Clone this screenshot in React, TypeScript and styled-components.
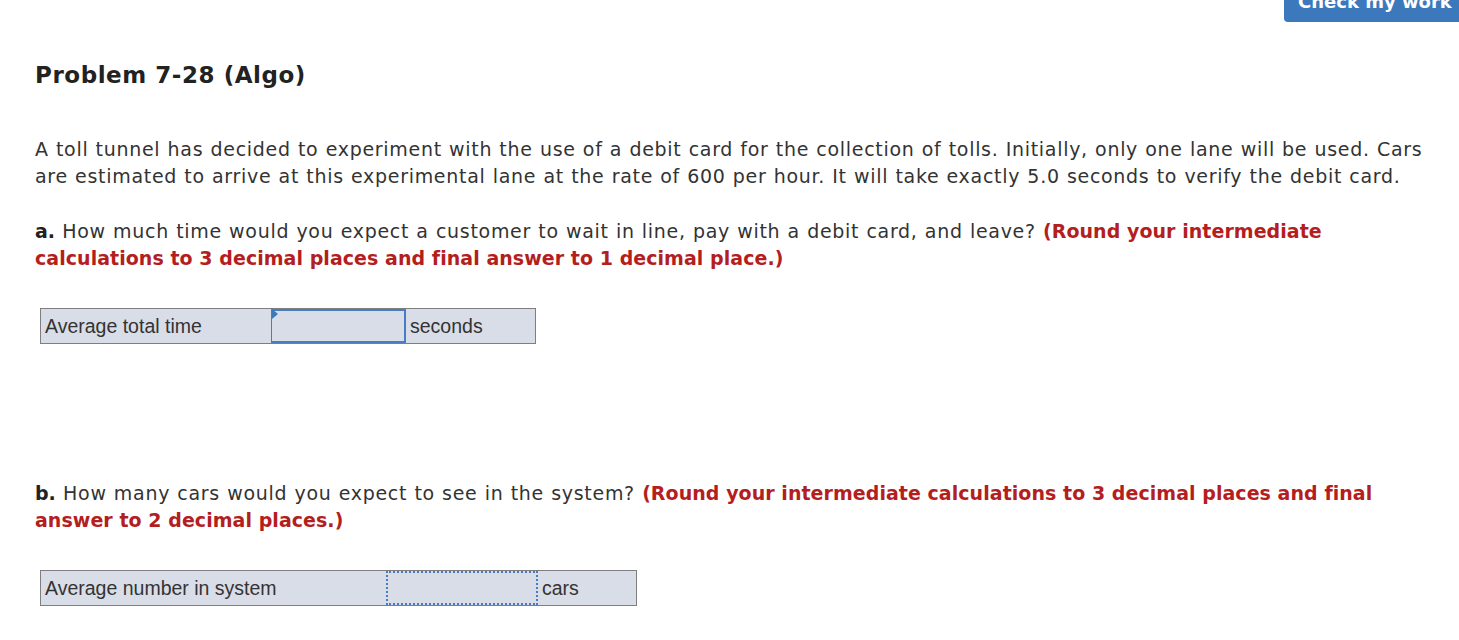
import React from "react";
import styled, { createGlobalStyle } from "styled-components";

const GlobalStyle = createGlobalStyle`
  html, body {
    margin: 0;
    padding: 0;
    background: #fff;
  }
  body {
    font-family: "DejaVu Sans", "Open Sans", sans-serif;
    color: #333;
  }
`;

const Page = styled.div`
  width: 1459px;
  height: 640px;
  overflow: hidden;
  position: relative;
`;

const TopBar = styled.div`
  display: flex;
  justify-content: flex-end;
  height: 22px;
`;

const CheckButton = styled.button`
  margin-top: -20px;
  width: 180px;
  height: 42px;
  margin-right: -5px;
  border: none;
  border-radius: 4px;
  background: #3b78bc;
  color: #fff;
  font-family: "DejaVu Sans", "Open Sans", sans-serif;
  font-weight: 700;
  font-size: 18px;
  text-align: left;
  padding: 0 0 0 14px;
  white-space: nowrap;
`;

const Content = styled.div`
  padding: 0 0 0 35px;
`;

const Title = styled.h1`
  margin: 37px 0 0 0;
  font-size: 23px;
  line-height: 32px;
  font-weight: 700;
  letter-spacing: 0.55px;
  color: #222;
`;

const Para = styled.p<{ $top: number }>`
  margin: ${(p) => p.$top}px 0 0 0;
  font-size: 19px;
  line-height: 27px;
  letter-spacing: 0.7px;
  word-spacing: 0.5px;
  max-width: 1400px;
  color: #333;
`;

const Label = styled.b`
  font-weight: 700;
  color: #222;
  letter-spacing: 0;
`;

const Note = styled.b`
  font-weight: 700;
  color: #b41e1e;
  letter-spacing: 0.05px;
  word-spacing: 0;
`;

const AnswerTable = styled.div<{ $top: number }>`
  display: flex;
  margin: ${(p) => p.$top}px 0 0 5px;
  width: max-content;
  border: 1px solid #7f7f7f;
  background: #d9dde7;
  height: 34px;
  font-family: "Liberation Sans", Arial, sans-serif;
  font-size: 19.5px;
  color: #333;
`;

const Cell = styled.div<{ $w: number }>`
  width: ${(p) => p.$w}px;
  display: flex;
  align-items: center;
  padding-left: 4px;
  box-sizing: border-box;
`;

const InputBox = styled.div<{ $w: number; $dotted?: boolean }>`
  position: relative;
  width: ${(p) => p.$w}px;
  box-sizing: border-box;
  border: 2px ${(p) => (p.$dotted ? "dotted" : "solid")} #4a7cc4;
  border-left-width: ${(p) => (p.$dotted ? 2 : 1)}px;
`;

const Flag = styled.span`
  position: absolute;
  left: 0;
  top: -2px;
  width: 0;
  height: 0;
  border-top: 5px solid transparent;
  border-bottom: 5px solid transparent;
  border-left: 6px solid #3b78bc;
`;

export default function App() {
  return (
    <Page>
      <GlobalStyle />
      <TopBar>
        <CheckButton>Check my work</CheckButton>
      </TopBar>
      <Content>
        <Title>Problem 7-28 (Algo)</Title>
        <Para $top={45}>
          A toll tunnel has decided to experiment with the use of a debit card for the collection of tolls. Initially,
          only one lane will be used. Cars are estimated to arrive at this experimental lane at the rate of 600 per
          hour. It will take exactly 5.0 seconds to verify the debit card.
        </Para>
        <Para $top={28}>
          <Label>a.</Label> How much time would you expect a customer to wait in line, pay with a debit card, and
          leave? <Note>(Round your intermediate calculations to 3 decimal places and final answer to 1 decimal place.)</Note>
        </Para>
        <AnswerTable $top={36}>
          <Cell $w={230}>Average total time</Cell>
          <InputBox $w={135}>
            <Flag />
          </InputBox>
          <Cell $w={129}>seconds</Cell>
        </AnswerTable>
        <Para $top={136}>
          <Label>b.</Label> How many cars would you expect to see in the system?{" "}
          <Note>(Round your intermediate calculations to 3 decimal places and final answer to 2 decimal places.)</Note>
        </Para>
        <AnswerTable $top={36}>
          <Cell $w={345}>Average number in system</Cell>
          <InputBox $w={152} $dotted />
          <Cell $w={98}>cars</Cell>
        </AnswerTable>
      </Content>
    </Page>
  );
}
